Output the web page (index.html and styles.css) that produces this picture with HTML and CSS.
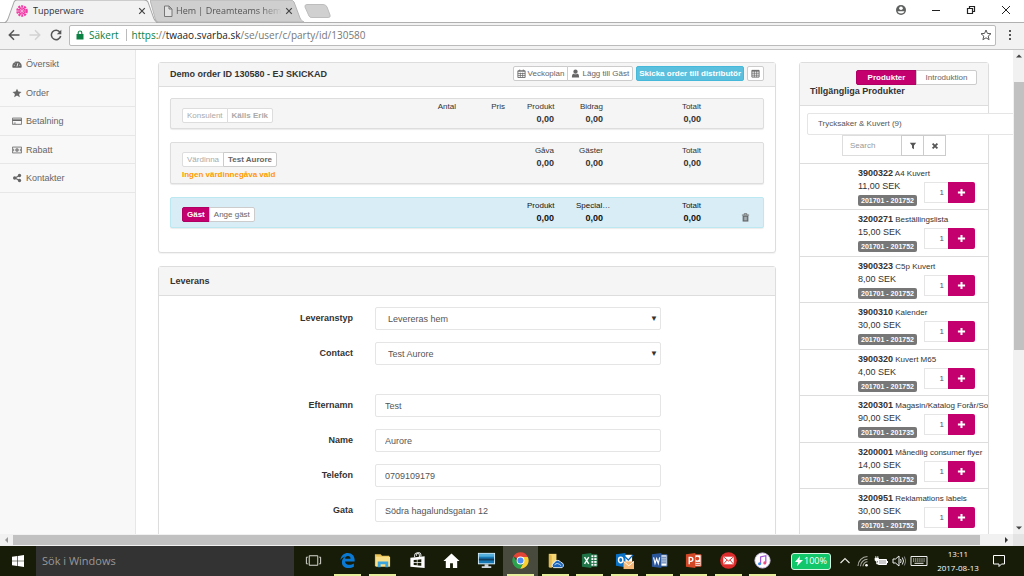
FILE: index.html
```html
<!DOCTYPE html>
<html lang="sv">
<head>
<meta charset="utf-8">
<title>Tupperware</title>
<link rel="stylesheet" href="styles.css">
</head>
<body>
<svg class="defs" aria-hidden="true">
  <symbol id="plus" viewBox="0 0 10 10"><path d="M3.900 1h2.200v2.900H9v2.200H6.100V9H3.900V6.100H1V3.900h2.900z" fill="currentColor"/></symbol>
  <symbol id="close" viewBox="0 0 10 10"><path d="M1.500 1.500l7 7M8.500 1.500l-7 7" stroke="currentColor" stroke-width="1.500" fill="none"/></symbol>
</svg>

<header class="tabstrip">
  <div class="tab active">
    <svg class="shape" viewBox="0 0 154 22" preserveAspectRatio="none"><path d="M0 22C3 21 3 20 4 18L10 2Q11 0 13 0H140Q143 0 144 2L150 18C151 20 152 21 154 22z" fill="#f2f2f2" stroke="#a5a5a5"/></svg>
    <svg class="fav" viewBox="0 0 12 12"><circle cx="6" cy="6" r="4.600" fill="none" stroke="#f03aa5" stroke-width="2.400" stroke-dasharray="2 .9"/><circle cx="6" cy="6" r="3.600" fill="#f03aa5"/><path d="M6 2.600v6.800M2.600 6h6.800M3.600 3.600l4.800 4.800M8.400 3.600L3.600 8.400" stroke="#ffc2e4" stroke-width=".6"/></svg>
    <span class="title">Tupperware</span>
    <button class="tabclose" aria-label="Stäng flik"><svg viewBox="0 0 10 10"><use href="#close"/></svg></button>
  </div>
  <div class="tab idle">
    <svg class="shape" viewBox="0 0 154 22" preserveAspectRatio="none"><path d="M0 0H140Q143 0 144 2L150 18C151 20 152 21 154 22H8Q6 22 5 18z" fill="#cfcfcf" stroke="#b5b5b5"/></svg>
    <svg class="fav" viewBox="0 0 12 12"><path d="M2.500 1H7l3 3v7.500H2.500zM7 1v3h3" fill="#e2e2e2" stroke="#777"/></svg>
    <span class="title fade">Hem | Dreamteams hem</span>
    <button class="tabclose" aria-label="Stäng flik"><svg viewBox="0 0 10 10"><use href="#close"/></svg></button>
  </div>
  <button class="newtab" aria-label="Ny flik"><svg viewBox="0 0 28 14"><path d="M3 .5H19Q22 .5 23 3L26 11Q27 13.500 24 13.500H8Q5.500 13.500 5 12L1 3Q.5 .5 3 .5z" fill="#d0d0d0" stroke="#bdbdbd"/></svg></button>
  <div class="winctl">
    <button aria-label="Profil"><svg viewBox="0 0 12 12"><circle cx="6" cy="6" r="5" fill="#5f6060"/><circle cx="6" cy="4.200" r="1.800" fill="#fff"/><path d="M2.500 7.200h7Q8.800 9.600 6 9.600T2.500 7.200z" fill="#fff"/></svg></button>
    <button aria-label="Minimera"><svg viewBox="0 0 12 12"><path d="M2 6.500h8" stroke="#222"/></svg></button>
    <button aria-label="Återställ"><svg viewBox="0 0 12 12"><path d="M2.500 4.500h5v5h-5zM4.500 4.500v-2h5v5h-2" fill="none" stroke="#222" stroke-width="1.200"/></svg></button>
    <button aria-label="Stäng"><svg viewBox="0 0 12 12"><path d="M2 2l8 8M10 2l-8 8" stroke="#222"/></svg></button>
  </div>
</header>

<div class="toolbar">
  <button class="nav" aria-label="Bakåt"><svg viewBox="0 0 12 12"><path d="M11.500 6H1.500M6 1.300L1.300 6 6 10.700" fill="none" stroke="#555" stroke-width="1.500"/></svg></button>
  <button class="nav" aria-label="Framåt"><svg viewBox="0 0 12 12"><path d="M.5 6h10M6 1.300L10.700 6 6 10.700" fill="none" stroke="#d2d2d2" stroke-width="1.500"/></svg></button>
  <button class="nav" aria-label="Läs om"><svg viewBox="0 0 12 12"><path d="M10 3.300A4.700 4.700 0 1 0 10.700 7" fill="none" stroke="#555" stroke-width="1.500"/><path d="M11.300.8v4.500H6.800z" fill="#555"/></svg></button>
  <div class="address">
    <svg class="lock" viewBox="0 0 8 10"><path d="M.5 4h7v5.500h-7z" fill="#0b8043"/><path d="M2.200 4.500V2.800a1.800 1.800 0 0 1 3.600 0v1.700" fill="none" stroke="#0b8043" stroke-width="1.100"/></svg>
    <span class="secure">Säkert</span>
    <span class="url"><span class="scheme">https:</span>//<b>twaao.svarba.sk</b>/se/user/c/party/id/130580</span>
    <svg class="star" viewBox="0 0 12 12"><path d="M6 1l1.400 3.400 3.600.3-2.800 2.400.9 3.600L6 8.800l-3.100 1.900.9-3.600L1 4.700l3.600-.3z" fill="none" stroke="#555"/></svg>
  </div>
  <button class="menu" aria-label="Meny"><svg viewBox="0 0 4 12"><path d="M1 1h2v2H1zM1 5h2v2H1zM1 9h2v2H1z" fill="#555"/></svg></button>
</div>

<div class="viewport">
  <nav class="sidebar">
    <a href="#"><svg viewBox="0 0 12 12"><path d="M.8 10.500A5.600 5.600 0 1 1 11.200 10.500z" fill="currentColor"/><path d="M6 9l1-4M2.200 7.500h1M3.300 4.300l.8.800M5.500 2.800h.9M8.800 7.500h1" stroke="#f8f8f8" stroke-width="1.100"/></svg>Översikt</a>
    <a href="#"><svg viewBox="0 0 12 12"><path d="M6 .8l1.600 3.500 3.800.4-2.900 2.500.9 3.900L6 9.100l-3.400 2 .9-3.900L.6 4.700l3.800-.4z" fill="currentColor"/></svg>Order</a>
    <a href="#"><svg viewBox="0 0 12 12"><path d="M.5 2.500h11v7.500H.5z" fill="none" stroke="currentColor"/><path d="M.5 4h11v2H.5z" fill="currentColor"/><path d="M2 8.500h2.500" stroke="currentColor"/></svg>Betalning</a>
    <a href="#"><svg viewBox="0 0 12 12"><path d="M.5 2.500h11v7H.5z" fill="none" stroke="currentColor"/><circle cx="6" cy="6" r="2.100" fill="currentColor"/><path d="M2 4.500v3M10 4.500v3" stroke="currentColor"/><path d="M6 5v2" stroke="#fff" stroke-width=".7"/></svg>Rabatt</a>
    <a href="#"><svg viewBox="0 0 12 12"><path d="M9 3L3.500 6 9 9" fill="none" stroke="currentColor" stroke-width="1.300"/><circle cx="9" cy="3" r="2" fill="currentColor"/><circle cx="3.200" cy="6" r="2" fill="currentColor"/><circle cx="9" cy="9" r="2" fill="currentColor"/></svg>Kontakter</a>
  </nav>

  <main class="content">
    <div class="column">
      <section class="panel">
        <div class="panel-head order-head">
          <h2>Demo order ID 130580 - EJ SKICKAD</h2>
          <div class="group">
            <button class="btn"><svg viewBox="0 0 10 10"><path d="M1 2h8v7.500H1z" fill="none" stroke="currentColor"/><path d="M1 2.500h8M3 .5v2M7 .5v2M1 5h8M1 7.200h8M3.700 4v5M6.300 4v5" stroke="currentColor" stroke-width=".8"/></svg>Veckoplan</button>
            <button class="btn"><svg viewBox="0 0 10 10"><circle cx="5" cy="3" r="2.400" fill="currentColor"/><path d="M1 9.500Q1 5 3 5.200q2 1.300 4 0Q9 5 9 9.500z" fill="currentColor"/></svg>Lägg till Gäst</button>
          </div>
          <button class="btn info">Skicka order till distributör</button>
          <button class="btn square" aria-label="Tabell"><svg viewBox="0 0 10 10"><path d="M1 1.500h8v7.500H1z" fill="none" stroke="currentColor"/><path d="M1 2.200h8" stroke="currentColor" stroke-width="1.400"/><path d="M1 4.700h8M1 6.900h8M3.700 2v7M6.300 2v7" stroke="currentColor" stroke-width=".8"/></svg></button>
        </div>
        <div class="rows">
          <div class="row">
            <div class="who"><div class="group"><button class="btn muted">Konsulent</button><button class="btn muted strong">Källs Erik</button></div></div>
            <div class="cell">Antal</div><div class="cell">Pris</div>
            <div class="cell">Produkt<b>0,00</b></div><div class="cell">Bidrag<b>0,00</b></div>
            <div class="cell"></div><div class="cell">Totalt<b>0,00</b></div>
          </div>
          <div class="row">
            <div class="who"><div class="group"><button class="btn muted">Värdinna</button><button class="btn strong">Test Aurore</button></div><p class="warn">Ingen värdinnegåva vald</p></div>
            <div class="cell"></div><div class="cell"></div>
            <div class="cell">Gåva<b>0,00</b></div><div class="cell">Gäster<b>0,00</b></div>
            <div class="cell"></div><div class="cell">Totalt<b>0,00</b></div>
          </div>
          <div class="row guest">
            <div class="who"><div class="group"><button class="btn primary">Gäst</button><button class="btn">Ange gäst</button></div></div>
            <div class="cell"></div><div class="cell"></div>
            <div class="cell">Produkt<b>0,00</b></div><div class="cell">Special…<b>0,00</b></div>
            <div class="cell"></div><div class="cell">Totalt<b>0,00</b></div>
            <button class="trash" aria-label="Ta bort"><svg viewBox="0 0 10 10"><path d="M1 2.300h8M3.500 2V.8h3V2" fill="none" stroke="currentColor"/><path d="M1.800 3h6.400v6.500H1.800z" fill="currentColor"/><path d="M3.700 4.200v4M5 4.200v4M6.300 4.200v4" stroke="#d9edf7" stroke-width=".6"/></svg></button>
          </div>
        </div>
      </section>

      <section class="panel">
        <div class="panel-head tall"><h2>Leverans</h2></div>
        <form class="form">
          <label for="typ">Leveranstyp</label>
          <div class="select"><select id="typ"><option>Levereras hem</option></select><span class="caret">▼</span></div>
          <label for="contact">Contact</label>
          <div class="select"><select id="contact"><option>Test Aurore</option></select><span class="caret">▼</span></div>
          <div class="spacer"></div>
          <label for="efternamn">Efternamn</label><input id="efternamn" value="Test">
          <label for="name">Name</label><input id="name" value="Aurore">
          <label for="telefon">Telefon</label><input id="telefon" value="0709109179">
          <label for="gata">Gata</label><input id="gata" value="Södra hagalundsgatan 12">
          <input class="short" aria-label="Postnummer">
        </form>
      </section>
    </div>

    <aside class="panel products">
      <div class="panel-head stack">
        <div class="group tabs"><button class="btn primary">Produkter</button><button class="btn">Introduktion</button></div>
        <h2>Tillgängliga Produkter</h2>
      </div>
      <div class="filters">
        <select class="category" aria-label="Kategori"><option>Trycksaker &amp; Kuvert (9)</option></select>
        <div class="search">
          <input placeholder="Search" aria-label="Search">
          <button aria-label="Filtrera"><svg viewBox="0 0 10 10"><path d="M1 1h8L6.200 4.500V9L3.800 7.500v-3z" fill="currentColor"/></svg></button>
          <button aria-label="Rensa"><svg viewBox="0 0 10 10"><path d="M2 2l6 6M8 2L2 8" stroke="currentColor" stroke-width="2.300"/></svg></button>
        </div>
      </div>
      <ul class="list">
        <li><p class="name"><b>3900322</b> A4 Kuvert</p><div><p class="price">11,00 SEK</p><span class="badge">201701 - 201752</span></div><div class="buy"><input value="1" aria-label="Antal"><button aria-label="Lägg till"><svg viewBox="0 0 10 10"><use href="#plus"/></svg></button></div></li>
        <li><p class="name"><b>3200271</b> Beställingslista</p><div><p class="price">15,00 SEK</p><span class="badge">201701 - 201752</span></div><div class="buy"><input value="1" aria-label="Antal"><button aria-label="Lägg till"><svg viewBox="0 0 10 10"><use href="#plus"/></svg></button></div></li>
        <li><p class="name"><b>3900323</b> C5p Kuvert</p><div><p class="price">8,00 SEK</p><span class="badge">201701 - 201752</span></div><div class="buy"><input value="1" aria-label="Antal"><button aria-label="Lägg till"><svg viewBox="0 0 10 10"><use href="#plus"/></svg></button></div></li>
        <li><p class="name"><b>3900310</b> Kalender</p><div><p class="price">30,00 SEK</p><span class="badge">201701 - 201752</span></div><div class="buy"><input value="1" aria-label="Antal"><button aria-label="Lägg till"><svg viewBox="0 0 10 10"><use href="#plus"/></svg></button></div></li>
        <li><p class="name"><b>3900320</b> Kuvert M65</p><div><p class="price">4,00 SEK</p><span class="badge">201701 - 201752</span></div><div class="buy"><input value="1" aria-label="Antal"><button aria-label="Lägg till"><svg viewBox="0 0 10 10"><use href="#plus"/></svg></button></div></li>
        <li><p class="name"><b>3200301</b> Magasin/Katalog Forår/So</p><div><p class="price">90,00 SEK</p><span class="badge">201701 - 201735</span></div><div class="buy"><input value="1" aria-label="Antal"><button aria-label="Lägg till"><svg viewBox="0 0 10 10"><use href="#plus"/></svg></button></div></li>
        <li><p class="name"><b>3200001</b> Månedlig consumer flyer</p><div><p class="price">14,00 SEK</p><span class="badge">201701 - 201752</span></div><div class="buy"><input value="1" aria-label="Antal"><button aria-label="Lägg till"><svg viewBox="0 0 10 10"><use href="#plus"/></svg></button></div></li>
        <li><p class="name"><b>3200951</b> Reklamations labels</p><div><p class="price">30,00 SEK</p><span class="badge">201701 - 201752</span></div><div class="buy"><input value="1" aria-label="Antal"><button aria-label="Lägg till"><svg viewBox="0 0 10 10"><use href="#plus"/></svg></button></div></li>
      </ul>
    </aside>
  </main>

  <div class="vscroll">
    <svg viewBox="0 0 10 10"><path d="M2 6.500h6L5 3.500z" fill="#444"/></svg>
    <div class="vtrack"><div class="vthumb"></div></div>
    <svg viewBox="0 0 10 10"><path d="M2 3.500h6L5 6.500z" fill="#444"/></svg>
  </div>
</div>
<div class="hscroll">
  <svg viewBox="0 0 10 10"><path d="M6.500 2v6L3.500 5z" fill="#999"/></svg>
  <div class="htrack"><div class="hthumb"></div></div>
  <svg viewBox="0 0 10 10"><path d="M3.500 2v6l3-3z" fill="#333"/></svg>
  <div class="corner"></div>
</div>

<footer class="taskbar">
  <button class="start" aria-label="Start"><svg viewBox="0 0 12 12"><path d="M0 1.700L5.300 1v4.700H0zM5.900.9L12 0v5.700H5.900zM0 6.300h5.300V11L0 10.300zM5.900 6.300H12V12l-6.100-.9z" fill="#fff"/></svg></button>
  <input class="find" placeholder="Sök i Windows" aria-label="Sök i Windows">
  <div class="apps">
    <button aria-label="Aktivitetsvy"><svg viewBox="0 0 20 20"><path d="M5.500 5h9v10h-9zM4 6.500H2.500v7H4M16 6.500h1.500v7H16" fill="none" stroke="#e4e4dc"/></svg></button>
    <button class="open" aria-label="Edge"><svg viewBox="0 0 20 20"><path d="M2.500 9.500C3.200 4.300 6.500 2 10.300 2c4.500 0 7.200 3.200 7.200 7.200v1.800H7.300c.2 2.400 2.400 3.500 4.700 3.500 1.800 0 3.400-.5 4.700-1.300v3.400c-1.500.8-3.400 1.400-5.500 1.400-4.400 0-7.100-2.500-7.100-6.200 0-2.800 1.600-4.900 3.900-6C5.700 6.500 3.700 7.700 2.500 9.500zM7.400 8.200h5.800c0-1.900-1-2.900-2.700-2.900S7.600 6.400 7.400 8.200z" fill="#0a79d3"/></svg></button>
    <button class="open" aria-label="Utforskaren"><svg viewBox="0 0 20 20"><path d="M2 3.500h6l1.500 1.500H17v11H2z" fill="#e9c255"/><path d="M3 6h15v10.500H3z" fill="#fbe08a"/><path d="M5 17v-6h11v6h-3v-3H8v3z" fill="#3ba5dd"/></svg></button>
    <button aria-label="Store"><svg viewBox="0 0 20 20"><path d="M7 6.500V4.500a2.500 2.500 0 0 1 5 0v2M9 5V4a2.300 2.300 0 0 1 4.600 0v2" fill="none" stroke="#fff"/><path d="M2.500 7l15-1.500V18l-15-1.500z" fill="#fff"/><path d="M6 9.500l3.300-.3v2.600H6zM10 9.100l4-.4v3.100h-4zM6 12.500h3.300v2.600L6 14.800zM10 12.500h4v3.100l-4-.4z" fill="#161c08"/></svg></button>
    <button aria-label="Hem"><svg viewBox="0 0 20 20"><path d="M10 2.500l8.500 8H16V18h-4.500v-5h-3v5H4v-7.500H1.500z" fill="#fff"/></svg></button>
    <button aria-label="Skrivbord"><svg viewBox="0 0 20 20"><path d="M1 2h18v12H1z" fill="#d9edf7"/><path d="M2 3h16v10H2z" fill="#1678b4"/><path d="M2 3h16v3H2z" fill="#55b0dd"/><path d="M2 8h16v2H2z" fill="#123c5b"/><path d="M8 14h4v2h3v2H5v-2h3z" fill="#cfd7dd"/></svg></button>
    <button class="open current" aria-label="Chrome"><svg viewBox="0 0 20 20"><path d="M10 10L2.600 5.500A8.600 8.600 0 0 1 17.700 6.200H10z" fill="#e24435"/><path d="M10 10V6.200h7.700A8.600 8.600 0 0 1 9.500 18.600L13.300 12z" fill="#fbd034"/><path d="M2.600 5.500L6.700 12 13.300 12 9.500 18.600A8.600 8.600 0 0 1 2.600 5.500z" fill="#2ba24c"/><circle cx="10" cy="10" r="4.100" fill="#fff"/><circle cx="10" cy="10" r="3.200" fill="#4b8bf4"/></svg></button>
    <button class="open" aria-label="OneDrive"><svg viewBox="0 0 20 20"><path d="M3 3h8v14H3z" fill="#f7d774"/><path d="M3 3l3 2v13l-3-1z" fill="#e5b94c"/><path d="M8 17.500a2.700 2.700 0 0 1 .4-5 4 4 0 0 1 7.300-.5 3 3 0 0 1 1.300 5.500z" fill="#1765bd" stroke="#fff" stroke-width=".9"/><path d="M9 14.500q3-3 7 1" stroke="#fff" fill="none" stroke-width=".8"/></svg></button>
    <button class="open" aria-label="Excel"><svg viewBox="0 0 20 20"><path d="M10 4h8v12h-8z" fill="#fff" stroke="#207346"/><path d="M10 7h8M10 10h8M10 13h8M14.500 4v12" stroke="#207346"/><path d="M2 3.500L12 2v16L2 16.500z" fill="#207346"/><path d="M4.800 6.500l4.400 7M9.200 6.500l-4.400 7" stroke="#fff" stroke-width="1.500"/></svg></button>
    <button class="open" aria-label="Outlook"><svg viewBox="0 0 20 20"><path d="M10 4h8v8h-8z" fill="#fff"/><path d="M10.500 6l3.500 3.500L19 4" fill="none" stroke="#0a68bf" stroke-width="1.300"/><path d="M1 3.500L11 2v15L1 15.500z" fill="#0a72c6"/><ellipse cx="6" cy="9.500" rx="2.300" ry="2.900" fill="none" stroke="#fff" stroke-width="1.500"/><path d="M9 11h11v8H9z" fill="#f5b877"/><path d="M9 11l5.500 4.500L20 11" fill="none" stroke="#fff"/></svg></button>
    <button class="open" aria-label="Word"><svg viewBox="0 0 20 20"><path d="M10 4h8v12h-8z" fill="#fff" stroke="#2a5699"/><path d="M12 6.500h5M12 8.500h5M12 10.500h5M12 12.500h5" stroke="#2a5699"/><path d="M2 3.500L12 2v16L2 16.500z" fill="#2a5699"/><path d="M3.800 6.800l1.500 6.400L7 8l1.700 5.200 1.500-6.400" fill="none" stroke="#fff" stroke-width="1.200"/></svg></button>
    <button class="open" aria-label="PowerPoint"><svg viewBox="0 0 20 20"><path d="M10 4h8v12h-8z" fill="#fff" stroke="#d24726"/><circle cx="14" cy="8" r="2" fill="#d24726"/><path d="M12 12h5M12 14h5" stroke="#d24726"/><path d="M2 3.500L12 2v16L2 16.500z" fill="#d24726"/><path d="M5.500 14V6.700h1.700a2 2 0 0 1 0 4.200H5.500" fill="none" stroke="#fff" stroke-width="1.500"/></svg></button>
    <button class="open" aria-label="Mail"><svg viewBox="0 0 20 20"><circle cx="10" cy="10" r="8.800" fill="#dd2c2c"/><path d="M4.500 6h11v8h-11z" fill="#fff"/><path d="M4.500 6l5.500 4.500L15.500 6M4.500 14l4-4.500M15.500 14l-4-4.500" fill="none" stroke="#dd2c2c"/></svg></button>
    <button class="open" aria-label="iTunes"><svg viewBox="0 0 20 20"><circle cx="10" cy="10" r="8" fill="#fff" stroke="#d8c7ef"/><path d="M8 13.500V6.200l5.500-1.200v7.300" fill="none" stroke="#a155d8" stroke-width="1.300"/><circle cx="6.900" cy="13.500" r="1.600" fill="#3a8df0"/><circle cx="12.400" cy="12.500" r="1.600" fill="#ee4d82"/></svg></button>
  </div>
  <div class="tray">
    <div class="battery"><svg viewBox="0 0 8 10"><path d="M5 0L0 6h3L2 10l6-6H4.500z" fill="#fff"/></svg>100%</div>
    <svg class="ico" viewBox="0 0 14 14"><path d="M2.500 9L7 4.500 11.500 9" fill="none" stroke="#e6e6dd" stroke-width="1.200"/></svg>
    <svg class="ico" viewBox="0 0 14 14"><path d="M2 12A9.500 9.500 0 0 1 11.500 2.500M4.500 12.300a7 7 0 0 1 7-7M7 12.300a4.500 4.500 0 0 1 4.500-4.500" fill="none" stroke="#a9aaa0" stroke-width="1.100"/><circle cx="10.500" cy="11.300" r="1.300" fill="#fff"/></svg>
    <svg class="ico" viewBox="0 0 14 14"><path d="M4.500 5.500h8v5h-8z" fill="#ccc" stroke="#fff"/><path d="M1 4h3.500v2.500q-1.700 1.500-3.500 0zM1.800 2v2M3.800 2v2M2.700 7v3h2" fill="#fff" stroke="#fff" stroke-width=".7"/><path d="M13.500 7v2" stroke="#fff"/></svg>
    <svg class="ico" viewBox="0 0 14 14"><path d="M1 5h2.500L7 2v10L3.500 9H1z" fill="none" stroke="#eee"/><path d="M8.500 5q1.200 2 0 4M10.300 3.500q2.400 3.500 0 7" fill="none" stroke="#eee"/><path d="M12.300 2.500q3 4.500 0 9" fill="none" stroke="#888"/></svg>
    <svg class="keyboard" viewBox="0 0 18 14"><path d="M1 2.500h16v9H1z" fill="none" stroke="#eee"/><path d="M3 5h12M3 7h12" stroke="#eee" stroke-dasharray="1.200 .9"/><path d="M4.500 9.300h9" stroke="#eee"/></svg>
    <div class="clock"><span>13:11</span><span>2017-08-13</span></div>
    <svg class="note" viewBox="0 0 14 14"><path d="M1.500 1.500h11v8.500H9.500L7 12.500V10H1.500z" fill="none" stroke="#fff"/></svg>
  </div>
</footer>
</body>
</html>
```

FILE: styles.css
```css
* { box-sizing: border-box; }
body {
  margin: 0;
  height: 100vh;
  display: flex;
  flex-direction: column;
  overflow: hidden;
  background: #fff;
  color: #333;
  font: 9px/12px "Liberation Sans", Arial, sans-serif;
}
button, input, select { font: inherit; color: inherit; margin: 0; }
button { padding: 0; border: 0; background: none; display: flex; align-items: center; justify-content: center; }
h2, p, ul { margin: 0; padding: 0; }
h2 { font-size: 9px; line-height: 12px; }
svg { display: block; flex: none; }
.defs { display: none; }

/* Browser chrome */
.tabstrip { display: flex; flex: none; height: 22px; padding-left: 4px; font: 10px/22px "Open Sans", "Noto Sans", sans-serif; }
.tab { position: relative; isolation: isolate; display: flex; align-items: center; width: 154px; padding: 0 10px 0 12px; gap: 5px; }
.tab.active { z-index: 1; }
.tab.idle { margin-left: -8px; gap: 2px; }
.shape { position: absolute; left: 0; top: 0; width: 100%; height: 22px; z-index: -1; }
.tab.active .shape { height: 23px; }
.fav { width: 12px; height: 12px; }
.title { flex: 1; overflow: hidden; white-space: nowrap; font-size: 9px; color: #333; }
.fade { color: #555; -webkit-mask-image: linear-gradient(90deg, #000 80%, transparent); mask-image: linear-gradient(90deg, #000 80%, transparent); }
.tabclose { width: 12px; height: 12px; color: #444; }
.tabclose svg { width: 8px; height: 8px; }
.idle .tabclose { width: 10px; }
.newtab svg { width: 28px; height: 14px; }
.winctl { display: flex; margin-left: auto; padding-right: 1px; }
.winctl button { width: 35px; height: 20px; }
.winctl svg { width: 12px; height: 12px; }

.toolbar { display: flex; align-items: center; flex: none; height: 28px; padding: 0 0 2px 3px; background: #f2f2f2; border-top: 1px solid #b0b0b0; border-bottom: 1px solid #c4c4c4; }
.nav { width: 21px; height: 20px; }
.nav svg { width: 12px; height: 12px; }
.address { flex: 1; display: flex; align-items: center; height: 21px; margin-left: 3px; padding: 0 3px 0 6px; background: #fff; border: 1px solid #bbb; border-radius: 2px; font: 10px/18px "Open Sans", "Noto Sans", sans-serif; color: #777; }
.lock { width: 8px; height: 10px; margin-right: 5px; }
.secure { padding-right: 7px; margin-right: 5px; line-height: 12px; color: #0b8043; border-right: 1px solid #bbb; }
.scheme { color: #0b8043; }
.url b { font-weight: 400; color: #222; }
.star { width: 12px; height: 12px; margin-left: auto; }
.menu { width: 28px; height: 20px; }
.menu svg { width: 4px; height: 12px; }

/* Page */
.viewport { flex: 1; min-height: 0; display: flex; overflow: hidden; }
.sidebar { flex: none; width: 136px; background: #f8f8f8; border-right: 1px solid #e7e7e7; }
.sidebar a { display: flex; align-items: center; gap: 4px; height: 28px; padding-left: 12px; color: #666; text-decoration: none; border-bottom: 1px solid #e7e7e7; }
.sidebar a:nth-child(odd) { height: 29px; }
.sidebar svg { width: 10px; height: 10px; }
.content { flex: 1; min-width: 0; display: grid; grid-template-columns: 618fr 190fr; gap: 23px; align-items: start; padding: 12px 24px 0 22px; overflow: hidden; }
.column { display: grid; gap: 13px; min-width: 0; }
.panel { min-width: 0; background: #fff; border: 1px solid #ddd; border-radius: 3px; box-shadow: 0 1px 1px rgba(0, 0, 0, .05); }
.panel-head { padding: 4px 11px; background: #f5f5f5; border-bottom: 1px solid #ddd; color: #333; }
.order-head { display: flex; align-items: center; gap: 3px; padding: 3px 11px 5px; }
.order-head h2 { flex: 1; }
.order-head .btn { padding: 0 3px; }
.tall { padding: 8px 11px; }
.stack { padding: 7px 11px 8px 10px; }
.group { display: flex; }
.btn { height: 15px; padding: 0 4px; gap: 2px; background: #fff; border: 1px solid #ccc; border-radius: 2px; font-size: 8px; line-height: 10px; color: #666; white-space: nowrap; }
.btn svg { width: 9px; height: 9px; }
.group .btn + .btn { margin-left: -1px; border-top-left-radius: 0; border-bottom-left-radius: 0; }
.group .btn:first-child { border-top-right-radius: 0; border-bottom-right-radius: 0; }
.btn.muted { color: #aaa; border-color: #ddd; }
.btn.strong { font-weight: 700; }
.order-head .info { padding: 0 2px; background: #5bc0de; border-color: #46b8da; color: #fff; font-weight: 700; }
.btn.primary { background: #c4006f; border-color: #b00064; color: #fff; font-weight: 700; }

.rows { display: grid; gap: 13px; padding: 11px 11px 24px; }
.row { display: grid; grid-template-columns: 1fr repeat(6, 27px) 40px; column-gap: 22px; min-height: 31px; background: #f5f5f5; border: 1px solid #ddd; border-radius: 2px; box-shadow: 0 1px 1px rgba(0, 0, 0, .08); font-size: 8px; }
.who { padding: 9px 0 2px 11px; }
.row:not(:nth-child(2)) .who { padding-bottom: 0; }
.warn { padding-top: 2px; font-weight: 700; color: #f90; white-space: nowrap; }
.cell { padding-top: 2px; text-align: right; white-space: nowrap; }
.cell b { display: block; font-size: 9px; }
.guest { background: #d9edf7; border-color: #bce8f1; color: #111; }
.trash { justify-self: start; align-self: end; height: 20px; padding-left: 18px; color: #666; }
.trash svg { width: 9px; height: 9px; }

.form { display: grid; grid-template-columns: 194fr 286fr 92fr; column-gap: 22px; row-gap: 12px; padding-top: 11px; }
.form label { grid-column: 1; padding-top: 5px; text-align: right; font-weight: 700; }
.form input, .select { grid-column: 2; width: 100%; height: 23px; }
.form input, .form select { padding: 0 9px; border: 1px solid #e5e5e5; border-radius: 2px; background: #fff; color: #555; outline: 0; }
.select { display: grid; align-items: center; }
.select select, .caret { grid-area: 1 / 1; }
.form select { width: 100%; height: 23px; padding-left: 12px; appearance: none; }
.caret { justify-self: end; padding-right: 3px; pointer-events: none; font-size: 8px; color: #333; }
.spacer { grid-column: 1 / -1; height: 5px; }
.form .short { width: 28%; }

.tabs { justify-content: flex-end; }
.tabs .btn { flex: none; width: 61px; }
.filters { padding: 7px; }
.category { display: block; width: 220px; height: 22px; position: relative; padding: 0 10px; appearance: none; background: #fff; border: 1px solid #e5e5e5; border-radius: 2px; font-size: 8px; color: #555; }
.search { display: flex; justify-content: center; font-size: 8px; }
.search input { width: 60px; height: 21px; padding: 0 7px; border: 1px solid #ddd; background: #fff; }
.search input::placeholder { color: #999; opacity: 1; }
.search button { width: 23px; height: 21px; margin-left: -1px; border: 1px solid #ccc; background: #fff; color: #555; }
.search svg { width: 8px; height: 8px; }
.list { list-style: none; border-top: 1px solid #ddd; }
.list li { display: grid; grid-template-columns: 1fr 51px; grid-template-rows: 12px 1fr; column-gap: 7px; height: 46px; padding: 3px 13px 0 58px; border-bottom: 1px solid #ddd; overflow: hidden; }
.list li:nth-child(even) { height: 47px; }
.name { grid-column: 1 / -1; white-space: nowrap; font-size: 8px; }
.name b { font-size: 9px; }
.price { line-height: 14px; }
.badge { display: block; width: 59px; height: 11px; margin-top: 2px; text-align: center; background: #777; border-radius: 2px; color: #fff; font-size: 7px; line-height: 11px; font-weight: 700; white-space: nowrap; }
.buy { display: flex; padding-top: 3px; }
.buy input { width: 24px; height: 21px; padding: 0 4px; text-align: right; border: 1px solid #e5e5e5; border-right: 0; font-size: 8px; color: #555; }
.buy button { width: 27px; height: 21px; background: #c4006f; color: #fff; border-radius: 0 2px 2px 0; }
.buy svg { width: 9px; height: 9px; }

/* Scrollbars */
.vscroll { flex: none; display: flex; flex-direction: column; align-items: center; width: 11px; background: #f1f1f1; }
.vscroll svg { width: 10px; height: 12px; }
.vtrack { flex: 1; width: 100%; padding: 20px 0 0 1px; }
.vthumb { height: 61%; background: #c1c1c1; }
.hscroll { flex: none; display: flex; align-items: center; height: 12px; background: #f1f1f1; }
.hscroll svg { width: 13px; height: 10px; }
.htrack { flex: 1; height: 10px; }
.hthumb { width: 98%; height: 10px; background: #c1c1c1; }
.corner { width: 11px; height: 12px; background: #e4e4e4; }

/* Taskbar */
.taskbar { flex: none; display: flex; height: 30px; background: #161c08; color: #fff; font-family: "Open Sans", "Noto Sans", sans-serif; }
.start { width: 36px; }
.start svg { width: 12px; height: 12px; }
.find { width: 258px; padding: 0 6px; border: 0; background: #333; font-size: 11px; }
.find::placeholder { color: #999; opacity: 1; }
.apps { flex: 1; display: flex; padding-left: 2px; }
.apps button { flex: 1; padding-bottom: 2px; }
.apps svg { width: 19px; height: 19px; }
.apps .open { background: linear-gradient(#e6ee9c, #e6ee9c) center bottom / 27px 2px no-repeat; }
.apps .current { background-color: #474a3c; }
.tray { flex: none; display: flex; align-items: center; width: 244px; gap: 4px; padding-left: 11px; }
.battery { display: flex; align-items: center; justify-content: center; gap: 1px; width: 40px; height: 17px; margin-right: 3px; background: #12c76a; border: 1px solid #d6f5e2; border-radius: 3px; font-size: 9px; }
.battery svg { width: 8px; height: 10px; }
.ico { width: 14px; height: 14px; }
.keyboard { width: 18px; height: 14px; }
.clock { display: flex; flex-direction: column; align-items: center; width: 52px; font-size: 8px; line-height: 14px; }
.note { width: 14px; height: 14px; margin-left: 4px; }
```
